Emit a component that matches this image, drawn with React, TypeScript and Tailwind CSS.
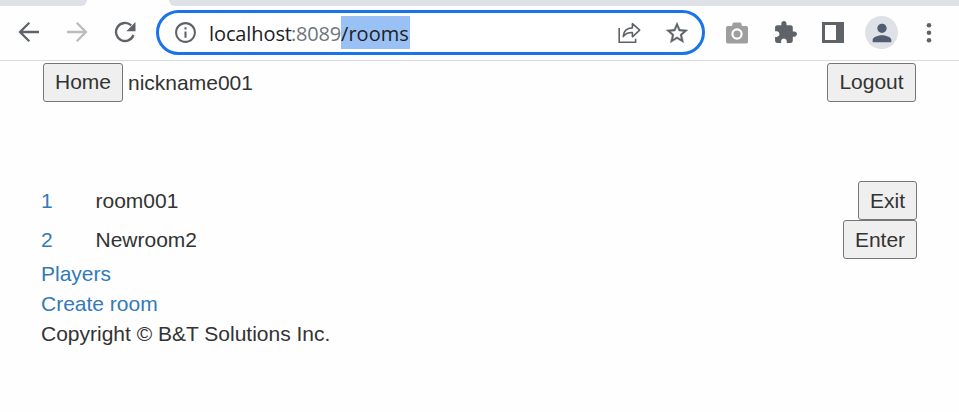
import type { ReactNode } from 'react';

type IconProps = { d: string; size: string; color?: string };

function Icon({ d, size, color = 'text-[#5f6368]' }: IconProps) {
  return (
    <svg viewBox="0 0 24 24" fill="currentColor" className={`block shrink-0 ${size} ${color}`}>
      <path d={d} />
    </svg>
  );
}

function Button({ children, width }: { children: ReactNode; width: string }) {
  return (
    <button
      className={`h-[39px] shrink-0 rounded-[3px] border border-[#767676] bg-[#efefef] text-center ${width}`}
    >
      {children}
    </button>
  );
}

const rooms = [
  { id: 1, name: 'room001', action: 'Exit', width: 'w-[59px] leading-[32px]' },
  { id: 2, name: 'Newroom2', action: 'Enter', width: 'w-[74px] leading-[32px]' },
];

function AddressBar() {
  return (
    <div className="ml-[16px] flex h-[45px] w-[549px] items-center rounded-full border-[3px] border-[#1a73e8] bg-white pl-[14px]">
      <Icon
        size="size-[25px]"
        d="M11 7h2v2h-2zm0 4h2v6h-2zm1-9C6.48 2 2 6.48 2 12s4.48 10 10 10 10-4.48 10-10S17.52 2 12 2zm0 18c-4.41 0-8-3.59-8-8s3.59-8 8-8 8 3.59 8 8-3.59 8-8 8z"
      />
      <div className="ml-[11px] flex h-[33px] items-start whitespace-nowrap font-['Open_Sans','Noto_Sans',sans-serif] text-[20px] leading-[35px] text-[#202124]">
        <span className="w-[82px] tracking-[-0.1px]">localhost</span>
        <span className="w-[50px] tracking-[-0.2px] text-[#70757a]">:8089</span>
        <span className="h-[33px] w-[69px] bg-[#99c1f5] tracking-[0.05px]">/rooms</span>
      </div>
      <svg viewBox="0 0 24 24" className="ml-[207px] size-[24px] shrink-0" fill="none" stroke="#5f6368" strokeWidth="1.6">
        <path d="M2.2 7v14.2h16.4v-3.4" />
        <path d="M15.4 2.7v4.2C9.6 7 6.6 9.8 6.2 15.6c2.2-3 5.1-4.3 9.2-4.1v4.3l7.3-6.6z" strokeLinejoin="round" />
      </svg>
      <svg viewBox="0 0 24 24" className="ml-[23px] size-[26px] shrink-0" fill="#5f6368" stroke="#5f6368" strokeWidth="0.3">
        <path d="M22 9.24l-7.19-.62L12 2 9.19 8.63 2 9.24l5.46 4.73L5.82 21 12 17.27 18.18 21l-1.63-7.03L22 9.24zM12 15.4l-3.76 2.27 1-4.28-3.32-2.88 4.38-.38L12 6.1l1.71 4.04 4.38.38-3.32 2.88 1 4.28L12 15.4z" />
      </svg>
    </div>
  );
}

function Toolbar() {
  return (
    <div className="flex h-[55px] items-center border-b border-[#d9dadd] pb-px pl-[14px]">
      <svg viewBox="0 0 30 30" className="mb-px size-[30px] shrink-0" fill="none" stroke="#5f6368" strokeWidth="2.3">
        <path d="M25 15H6.5M15.3 5.7L6 15l9.3 9.3" />
      </svg>
      <svg viewBox="0 0 30 30" className="mb-px ml-[18px] size-[30px] shrink-0" fill="none" stroke="#babcbe" strokeWidth="2.3">
        <path d="M5 15h18.5M14.7 5.7L24 15l-9.3 9.3" />
      </svg>
      <svg viewBox="0 0 30 30" className="mb-px ml-[18px] size-[30px] shrink-0">
        <path d="M21.2 8.4A9 9 0 1 0 23.5 18" fill="none" stroke="#5f6368" strokeWidth="2.3" />
        <path d="M25.5 5v9.200h-9.200z" fill="#5f6368" />
      </svg>
      <AddressBar />
      <svg viewBox="0 0 24 24" className="ml-[20px] size-[24px] shrink-0">
        <path
          fill="#9e9e9e"
          d="M9 1.500h6a1.500 1.500 0 0 1 1.500 1.500L17 5h4.200A1.800 1.800 0 0 1 23 6.800v14a1.700 1.700 0 0 1-1.700 1.700H2.700A1.700 1.700 0 0 1 1 20.800v-14A1.800 1.800 0 0 1 2.800 5H7l.5-2A1.500 1.500 0 0 1 9 1.500z"
        />
        <circle cx="12" cy="13" r="4.600" fill="#9e9e9e" stroke="white" strokeWidth="2.200" />
      </svg>
      <div className="ml-[24px]">
        <Icon
          size="size-[25px]"
          d="M20.500 11H19V7c0-1.100-.9-2-2-2h-4V3.500C13 2.120 11.880 1 10.500 1S8 2.120 8 3.500V5H4c-1.100 0-1.990.9-1.990 2v3.800H3.500c1.490 0 2.700 1.210 2.700 2.700s-1.210 2.700-2.700 2.700H2V20c0 1.100.9 2 2 2h3.800v-1.500c0-1.490 1.210-2.700 2.700-2.700s2.700 1.210 2.700 2.700V22H17c1.100 0 2-.9 2-2v-4h1.500c1.380 0 2.500-1.120 2.500-2.500S21.880 11 20.500 11z"
        />
      </div>
      <svg viewBox="0 0 22 21" className="ml-[24px] h-[21px] w-[22px] shrink-0">
        <path fill="#5f6368" fillRule="evenodd" d="M0 0h22v21H0zM3 3v15h11V3z" />
      </svg>
      <div className="ml-[21px] flex size-[33px] shrink-0 items-center justify-center rounded-full bg-[#dee1e6]">
        <Icon
          size="size-[28px]"
          color="text-[#525d73]"
          d="M12 12c2.210 0 4-1.790 4-4s-1.790-4-4-4-4 1.790-4 4 1.790 4 4 4zm0 2c-2.670 0-8 1.340-8 4v2h16v-2c0-2.660-5.330-4-8-4z"
        />
      </div>
      <svg viewBox="0 0 30 30" className="ml-[16px] size-[30px] shrink-0" fill="#5f6368">
        <circle cx="15" cy="7.300" r="2.300" />
        <circle cx="15" cy="14.800" r="2.300" />
        <circle cx="15" cy="22.300" r="2.300" />
      </svg>
    </div>
  );
}

export default function App() {
  return (
    <div className="h-[412px] w-[959px] overflow-hidden bg-[#fefefe] font-['Liberation_Sans',Arial,sans-serif] text-[21px] leading-[30px] text-[#333]">
      <div className="flex h-[6px] justify-between">
        <div className="w-[87px] rounded-br-[8px] bg-[#dee1e6]" />
        <div className="w-[790px] rounded-bl-[8px] bg-[#dee1e6]" />
      </div>
      <Toolbar />
      <header className="flex items-center pl-[43px] pr-[43px] pt-[2px]">
        <Button width="w-[80px] pb-px">Home</Button>
        <span className="ml-[5px]">nickname001</span>
        <div className="ml-auto flex">
          <Button width="w-[89px] pb-px">Logout</Button>
        </div>
      </header>
      <main className="mt-[79px] pl-[41px] pr-[42px]">
        {rooms.map((room) => (
          <div key={room.id} className="flex h-[39px] items-center">
            <a className="w-[54.5px] text-[#337ab7]">{room.id}</a>
            <span className="flex-1">{room.name}</span>
            <Button width={room.width}>{room.action}</Button>
          </div>
        ))}
        <a className="block text-[#337ab7]">Players</a>
        <a className="block text-[#337ab7]">Create room</a>
        <footer>Copyright © B&amp;T Solutions Inc.</footer>
      </main>
    </div>
  );
}
